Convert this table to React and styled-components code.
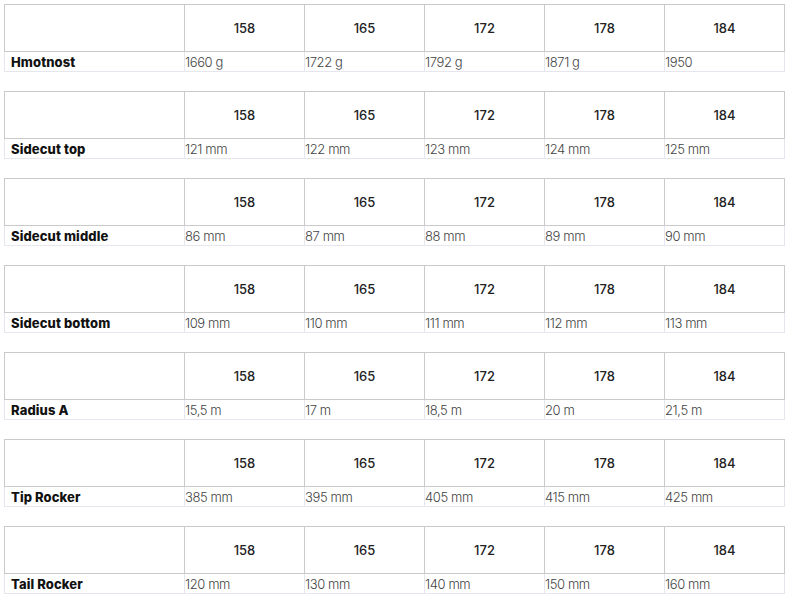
import React from "react";
import styled, { createGlobalStyle } from "styled-components";

const GlobalStyle = createGlobalStyle`
  body {
    margin: 0;
    background: #fff;
    font-family: Inter, "Noto Sans", sans-serif;
    color: #222;
  }
`;

const Page = styled.div`
  display: flex;
  flex-direction: column;
  gap: 19px;
  padding: 4px;
`;

const Table = styled.table`
  border-collapse: collapse;
  table-layout: fixed;
  width: 780px;
  font-size: 13px;
`;

const Col = styled.col`
  width: ${(p) => (p.$first ? "180px" : "120px")};
`;

const HeadCell = styled.th`
  height: 46px;
  padding: 0;
  border: 1px solid #cacaca;
  font-weight: 500;
  color: #222;
  text-align: center;
`;

const LabelCell = styled.td`
  height: 19px;
  padding: 0 0 0 6px;
  border: 1px solid #e6e7ee;
  border-top: none;
  font-weight: 800;
  color: #111;
  letter-spacing: 0.1px;
`;

const ValueCell = styled.td`
  height: 19px;
  padding: 0;
  border: 1px solid #e6e7ee;
  border-top: none;
  font-weight: 300;
  color: #444;
  letter-spacing: -0.4px;
`;

const sizes = ["158", "165", "172", "178", "184"];

const rows = [
  { label: "Hmotnost", values: ["1660 g", "1722 g", "1792 g", "1871 g", "1950"] },
  { label: "Sidecut top", values: ["121 mm", "122 mm", "123 mm", "124 mm", "125 mm"] },
  { label: "Sidecut middle", values: ["86 mm", "87 mm", "88 mm", "89 mm", "90 mm"] },
  { label: "Sidecut bottom", values: ["109 mm", "110 mm", "111 mm", "112 mm", "113 mm"] },
  { label: "Radius A", values: ["15,5 m", "17 m", "18,5 m", "20 m", "21,5 m"] },
  { label: "Tip Rocker", values: ["385 mm", "395 mm", "405 mm", "415 mm", "425 mm"] },
  { label: "Tail Rocker", values: ["120 mm", "130 mm", "140 mm", "150 mm", "160 mm"] },
];

const SpecTable = ({ label, values }) => (
  <Table>
    <colgroup>
      <Col $first />
      {sizes.map((s) => (
        <Col key={s} />
      ))}
    </colgroup>
    <thead>
      <tr>
        <HeadCell />
        {sizes.map((s) => (
          <HeadCell key={s}>{s}</HeadCell>
        ))}
      </tr>
    </thead>
    <tbody>
      <tr>
        <LabelCell>{label}</LabelCell>
        {values.map((v, i) => (
          <ValueCell key={i}>{v}</ValueCell>
        ))}
      </tr>
    </tbody>
  </Table>
);

const App = () => (
  <>
    <GlobalStyle />
    <Page>
      {rows.map((r) => (
        <SpecTable key={r.label} {...r} />
      ))}
    </Page>
  </>
);

export default App;
